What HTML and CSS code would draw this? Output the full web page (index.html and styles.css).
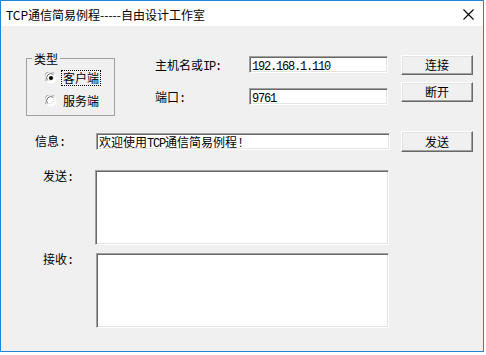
FILE: index.html
```html
<!DOCTYPE html>
<html lang="zh">
<head>
<meta charset="utf-8">
<title>TCP通信简易例程</title>
<link rel="stylesheet" href="styles.css">
</head>
<body>
<div class="window">
  <div class="titlebar">
    <span class="title">TCP通信简易例程-----自由设计工作室</span>
    <svg class="close" width="11" height="11" viewBox="0 0 11 11"><path d="M0.5 0.5 L10.5 10.5 M10.5 0.5 L0.5 10.5" stroke="#000" stroke-width="1.1" fill="none"/></svg>
  </div>
  <div class="client">
    <div class="top">
      <fieldset class="group">
        <legend>类型</legend>
        <div class="radio first">
          <svg class="rb" width="12" height="12" viewBox="0 0 12 12">
            <circle cx="6" cy="6" r="5.5" fill="#fff"/>
            <path d="M1.2 9.2 A5.5 5.5 0 0 1 9.2 1.2" stroke="#a0a0a0" stroke-width="1" fill="none"/>
            <path d="M2.4 8.4 A4.3 4.3 0 0 1 8.4 2.4" stroke="#696969" stroke-width="1" fill="none"/>
            <path d="M9.6 2.6 A5.5 5.5 0 0 1 2.6 9.6" stroke="#fff" stroke-width="1" fill="none"/>
            <path d="M8.6 3.2 A4.3 4.3 0 0 1 3.2 8.6" stroke="#e3e3e3" stroke-width="1" fill="none"/>
            <circle cx="6" cy="6" r="2" fill="#000"/>
          </svg>
          <span class="rtext focus">客户端</span>
        </div>
        <div class="radio second">
          <svg class="rb" width="12" height="12" viewBox="0 0 12 12">
            <circle cx="6" cy="6" r="5.5" fill="#fff"/>
            <path d="M1.2 9.2 A5.5 5.5 0 0 1 9.2 1.2" stroke="#a0a0a0" stroke-width="1" fill="none"/>
            <path d="M2.4 8.4 A4.3 4.3 0 0 1 8.4 2.4" stroke="#696969" stroke-width="1" fill="none"/>
            <path d="M9.6 2.6 A5.5 5.5 0 0 1 2.6 9.6" stroke="#fff" stroke-width="1" fill="none"/>
            <path d="M8.6 3.2 A4.3 4.3 0 0 1 3.2 8.6" stroke="#e3e3e3" stroke-width="1" fill="none"/>
          </svg>
          <span class="rtext">服务端</span>
        </div>
      </fieldset>
      <div class="conn">
        <span class="lbl">主机名或<span class="en">IP:</span></span>
        <div class="tb tb-ip"><span class="en">192.168.1.110</span></div>
        <button class="btn">连接</button>
        <span class="lbl lbl2">端口<span class="en">:</span></span>
        <div class="tb tb-port"><span class="en">9761</span></div>
        <button class="btn">断开</button>
      </div>
    </div>
    <div class="info-row">
      <span class="info-lbl">信息<span class="en">:</span></span>
      <div class="tb tb-info">欢迎使用<span class="en">TCP</span>通信简易例程<span class="en">!</span></div>
      <button class="btn btn-send">发送</button>
    </div>
    <div class="area-row send">
      <span class="area-lbl">发送<span class="en">:</span></span>
      <div class="tb area area-send"></div>
    </div>
    <div class="area-row recv">
      <span class="area-lbl recv-lbl">接收<span class="en">:</span></span>
      <div class="tb area area-recv"></div>
    </div>
  </div>
</div>
</body>
</html>
```

FILE: styles.css
```css
body {
  margin: 0;
  background: #fff;
  font-family: "Noto Sans CJK SC", sans-serif;
  font-size: 12px;
  color: #000;
}

.window {
  width: 484px;
  height: 352px;
  box-sizing: border-box;
  border: 1px solid #1e85d8;
  background: #f0f0f0;
  display: flex;
  flex-direction: column;
}

.titlebar {
  flex: none;
  height: 25px;
  background: #fff;
  display: flex;
  align-items: center;
  justify-content: space-between;
  padding: 0 9px 0 5px;
}

.title {
  font-family: "Noto Sans CJK SC", sans-serif;
  font-size: 12px;
  line-height: 25px;
  padding-top: 1px;
}

.close {
  display: block;
  margin-top: 1px;
}

.client {
  flex: 1;
  padding-top: 26px;
}

.en {
  font-family: "Liberation Mono", monospace;
  letter-spacing: -1.2px;
}

.top {
  display: flex;
  align-items: flex-start;
}

.group {
  margin: 0 0 0 25px;
  width: 89px;
  height: 64px;
  box-sizing: border-box;
  border: 1px solid #a0a0a0;
  padding: 0;
  min-width: 0;
}

.group legend {
  margin-left: 5px;
  padding: 0 2px;
  font-size: 12px;
  line-height: 13px;
}

.radio {
  display: flex;
  align-items: center;
  height: 16px;
  margin-left: 18px;
}

.radio.first {
  margin-top: 5px;
}

.radio.second {
  margin-top: 7px;
}

.rb {
  display: block;
  flex: none;
}

.rtext {
  margin-left: 4px;
  padding: 0 1px;
  border: 1px dotted transparent;
  line-height: 14px;
}

.rtext.focus {
  border-color: #000;
}

.conn {
  margin-left: 40px;
  margin-top: 3px;
  display: grid;
  grid-template-columns: 94px 138px 86px;
  grid-template-rows: 20px 23px;
  row-gap: 7px;
}

.lbl {
  line-height: 20px;
}

.lbl2 {
  margin-top: 6px;
  line-height: 17px;
}

.tb {
  box-sizing: border-box;
  background: #fff;
  border: 1px solid;
  border-color: #a0a0a0 #fff #fff #a0a0a0;
  box-shadow: inset 1px 1px #696969, inset -1px -1px #e3e3e3;
  padding: 1px 0 0 2px;
  line-height: 14px;
  white-space: nowrap;
}

.tb-ip {
  width: 139px;
  height: 17px;
  margin-top: 1px;
}

.tb-port {
  width: 139px;
  height: 17px;
  margin-top: 6px;
}

.btn {
  box-sizing: border-box;
  width: 72px;
  height: 20px;
  margin: 0 0 0 14px;
  padding: 0;
  background: #f0f0f0;
  border: 1px solid;
  border-color: #fff #696969 #696969 #fff;
  box-shadow: inset -1px -1px #a0a0a0, inset 1px 1px #e3e3e3;
  font-family: "Noto Sans CJK SC", sans-serif;
  font-size: 12px;
  line-height: 16px;
  color: #000;
}

.info-row {
  display: flex;
  align-items: center;
  margin-top: 15px;
  height: 21px;
  padding-left: 34px;
}

.info-lbl {
  width: 61px;
  line-height: 14px;
  flex: none;
}

.tb-info {
  width: 294px;
  height: 17px;
  flex: none;
}

.btn-send {
  height: 21px;
  margin-left: 11px;
  flex: none;
}

.area-row {
  display: flex;
  align-items: flex-start;
  padding-left: 42px;
}

.area-row.send {
  margin-top: 18px;
}

.area-row.recv {
  margin-top: 8px;
}

.area-lbl {
  width: 52px;
  line-height: 14px;
  flex: none;
  margin-top: -1px;
}

.recv-lbl {
  width: 53px;
}

.area {
  height: 75px;
  flex: none;
}

.area-send {
  width: 294px;
}

.area-recv {
  width: 293px;
}
```
